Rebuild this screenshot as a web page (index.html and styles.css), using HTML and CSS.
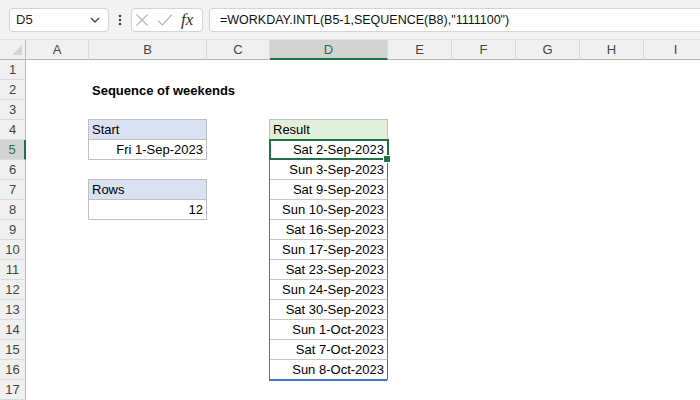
FILE: index.html
```html
<!DOCTYPE html>
<html>
<head>
<meta charset="utf-8">
<link rel="stylesheet" href="styles.css">
</head>
<body>
<div class="app">
  <div class="fbar">
    <div class="namebox">
      <span>D5</span>
      <svg class="chev" width="10" height="6" viewBox="0 0 10 6"><path d="M1 1 L5 5 L9 1" fill="none" stroke="#444" stroke-width="1.3"/></svg>
    </div>
    <div class="dots">
      <svg width="4" height="12" viewBox="0 0 4 12"><circle cx="2" cy="2" r="1.3" fill="#444"/><circle cx="2" cy="6" r="1.3" fill="#444"/><circle cx="2" cy="10" r="1.3" fill="#444"/></svg>
    </div>
    <div class="btns">
      <svg class="ico" width="14" height="14" viewBox="0 0 14 14"><path d="M1.5 1.5 L12.5 12.5 M12.5 1.5 L1.5 12.5" stroke="#b8b8b8" stroke-width="1.2" fill="none"/></svg>
      <svg class="ico" width="16" height="14" viewBox="0 0 16 14"><path d="M1 7.5 L5.5 12 L15 1.5" stroke="#b8b8b8" stroke-width="1.2" fill="none"/></svg>
      <span class="fx">fx</span>
    </div>
    <div class="formula">=WORKDAY.INTL(B5-1,SEQUENCE(B8),"1111100")</div>
  </div>

  <div class="sheet">
    <!-- header row -->
    <div class="corner"><svg width="26" height="20" viewBox="0 0 26 20"><path d="M22 5 L22 15 L12 15 Z" fill="#d4d4d4"/></svg></div>
    <div class="ch">A</div><div class="ch">B</div><div class="ch">C</div><div class="ch sel">D</div><div class="ch">E</div><div class="ch">F</div><div class="ch">G</div><div class="ch">H</div><div class="ch">I</div>

    <!-- row 1 -->
    <div class="rh">1</div><div></div><div></div><div></div><div></div><div></div><div></div><div></div><div></div><div></div>
    <!-- row 2 -->
    <div class="rh">2</div><div></div><div class="title">Sequence of weekends</div><div></div><div></div><div></div><div></div><div></div><div></div><div></div>
    <!-- row 3 -->
    <div class="rh">3</div><div></div><div></div><div></div><div></div><div></div><div></div><div></div><div></div><div></div>
    <!-- row 4 -->
    <div class="rh">4</div><div></div><div class="lbl">Start</div><div></div><div class="rlbl">Result</div><div></div><div></div><div></div><div></div><div></div>
    <!-- row 5 -->
    <div class="rh sel">5</div><div></div><div class="val">Fri 1-Sep-2023</div><div></div><div class="res cur">Sat 2-Sep-2023<span class="selbox"><span class="handle"></span></span></div><div></div><div></div><div></div><div></div><div></div>
    <!-- row 6 -->
    <div class="rh">6</div><div></div><div></div><div></div><div class="res">Sun 3-Sep-2023</div><div></div><div></div><div></div><div></div><div></div>
    <!-- row 7 -->
    <div class="rh">7</div><div></div><div class="lbl">Rows</div><div></div><div class="res">Sat 9-Sep-2023</div><div></div><div></div><div></div><div></div><div></div>
    <!-- row 8 -->
    <div class="rh">8</div><div></div><div class="val">12</div><div></div><div class="res">Sun 10-Sep-2023</div><div></div><div></div><div></div><div></div><div></div>
    <!-- row 9 -->
    <div class="rh">9</div><div></div><div></div><div></div><div class="res">Sat 16-Sep-2023</div><div></div><div></div><div></div><div></div><div></div>
    <!-- row 10 -->
    <div class="rh">10</div><div></div><div></div><div></div><div class="res">Sun 17-Sep-2023</div><div></div><div></div><div></div><div></div><div></div>
    <!-- row 11 -->
    <div class="rh">11</div><div></div><div></div><div></div><div class="res">Sat 23-Sep-2023</div><div></div><div></div><div></div><div></div><div></div>
    <!-- row 12 -->
    <div class="rh">12</div><div></div><div></div><div></div><div class="res">Sun 24-Sep-2023</div><div></div><div></div><div></div><div></div><div></div>
    <!-- row 13 -->
    <div class="rh">13</div><div></div><div></div><div></div><div class="res">Sat 30-Sep-2023</div><div></div><div></div><div></div><div></div><div></div>
    <!-- row 14 -->
    <div class="rh">14</div><div></div><div></div><div></div><div class="res">Sun 1-Oct-2023</div><div></div><div></div><div></div><div></div><div></div>
    <!-- row 15 -->
    <div class="rh">15</div><div></div><div></div><div></div><div class="res">Sat 7-Oct-2023</div><div></div><div></div><div></div><div></div><div></div>
    <!-- row 16 -->
    <div class="rh">16</div><div></div><div></div><div></div><div class="res last">Sun 8-Oct-2023</div><div></div><div></div><div></div><div></div><div></div>
    <!-- row 17 -->
    <div class="rh">17</div><div></div><div></div><div></div><div></div><div></div><div></div><div></div><div></div><div></div>
  </div>
</div>
</body>
</html>
```

FILE: styles.css
```css
html, body {
  margin: 0;
  padding: 0;
}
body {
  width: 700px;
  height: 400px;
  overflow: hidden;
  background: #ffffff;
  font-family: "Liberation Sans", Arial, sans-serif;
  color: #000;
}
.app {
  width: 700px;
  height: 400px;
  overflow: hidden;
}

/* formula bar */
.fbar {
  height: 40px;
  box-sizing: border-box;
  background: #f3f3f3;
  display: flex;
  align-items: center;
  padding-left: 9px;
  border-bottom: 1px solid #e3e3e3;
}
.namebox {
  flex: 0 0 100px;
  height: 24px;
  box-sizing: border-box;
  background: #fff;
  border: 1px solid #d4d4d4;
  border-radius: 4px;
  display: flex;
  align-items: center;
  justify-content: space-between;
  padding: 0 8px 0 6px;
  font-size: 13px;
  color: #222;
}
.chev {
  display: block;
}
.dots {
  flex: 0 0 22px;
  display: flex;
  justify-content: center;
  align-items: center;
}
.dots svg {
  display: block;
}
.btns {
  flex: 0 0 72px;
  height: 24px;
  box-sizing: border-box;
  background: #fff;
  border: 1px solid #d4d4d4;
  border-radius: 4px;
  display: flex;
  align-items: center;
  padding-left: 3px;
  gap: 8px;
}
.ico {
  display: block;
}
.fx {
  font-family: "Liberation Serif", "DejaVu Serif", serif;
  font-style: italic;
  font-size: 17px;
  color: #333;
}
.formula {
  flex: 0 0 600px;
  margin-left: 6px;
  height: 24px;
  box-sizing: border-box;
  background: #fff;
  border: 1px solid #d4d4d4;
  border-radius: 4px;
  padding-left: 10px;
  font-size: 12.5px;
  line-height: 22px;
  color: #111;
  white-space: nowrap;
}

/* sheet */
.sheet {
  display: grid;
  grid-template-columns: 26px 63px 118px 63px 118px 64px 64px 64px 64px 64px;
  grid-auto-rows: 20px;
  width: 708px;
  font-size: 13px;
}
.sheet > div {
  box-sizing: border-box;
  min-width: 0;
}
.corner {
  background: #f0f0f0;
  border-right: 1px solid #bcbcbc;
  border-bottom: 1px solid #b4b4b4;
}
.corner svg {
  display: block;
}
.ch {
  background: #f0f0f0;
  border-right: 1px solid #d9d9d9;
  border-bottom: 1px solid #b4b4b4;
  display: flex;
  align-items: center;
  justify-content: center;
  color: #444;
  font-size: 13px;
}
.ch.sel {
  background: #d3d3d3;
  border-bottom: 2px solid #217346;
  color: #217346;
}
.rh {
  background: #f0f0f0;
  border-right: 1px solid #bcbcbc;
  border-bottom: 1px solid #dadada;
  display: flex;
  align-items: center;
  justify-content: center;
  color: #444;
  font-size: 13px;
}
.rh.sel {
  background: #d3d3d3;
  border-right: 2px solid #217346;
  color: #217346;
}

.title {
  font-weight: bold;
  font-size: 13px;
  white-space: nowrap;
  overflow: visible;
  display: flex;
  align-items: flex-end;
  padding: 0 0 2px 3px;
  line-height: 15px;
}
.lbl, .val, .rlbl, .res {
  display: flex;
  align-items: flex-end;
  padding: 0 3px 2px 3px;
  line-height: 15px;
  white-space: nowrap;
}
.lbl {
  background: #d9e1f2;
  border-right: 1px solid #bfbfbf;
  border-bottom: 1px solid #bfbfbf;
  box-shadow: -1px 0 0 #bfbfbf, 0 -1px 0 #bfbfbf, -1px -1px 0 #bfbfbf;
}
.val {
  justify-content: flex-end;
  border-right: 1px solid #bfbfbf;
  border-bottom: 1px solid #bfbfbf;
  box-shadow: -1px 0 0 #bfbfbf;
}
.rlbl {
  background: #e2efda;
  border-right: 1px solid #bfbfbf;
  border-bottom: 1px solid #bfbfbf;
  box-shadow: -1px 0 0 #bfbfbf, 0 -1px 0 #bfbfbf, -1px -1px 0 #bfbfbf;
}
.res {
  justify-content: flex-end;
  border-right: 1px solid #4472c4;
  border-bottom: 1px solid #c8c8c8;
  box-shadow: -1px 0 0 #4472c4;
}
.res.last {
  border-bottom: 1px solid #4472c4;
  box-shadow: -1px 0 0 #4472c4, -1px 1px 0 #4472c4;
}
.res.cur {
  position: relative;
}
.selbox {
  position: absolute;
  left: -1px;
  top: -1px;
  width: 120px;
  height: 21px;
  box-sizing: border-box;
  border: 2px solid #217346;
  z-index: 2;
}
.handle {
  position: absolute;
  left: 113px;
  top: 15px;
  width: 6px;
  height: 6px;
  background: #217346;
  box-shadow: 0 0 0 1px #ffffff;
}
```
